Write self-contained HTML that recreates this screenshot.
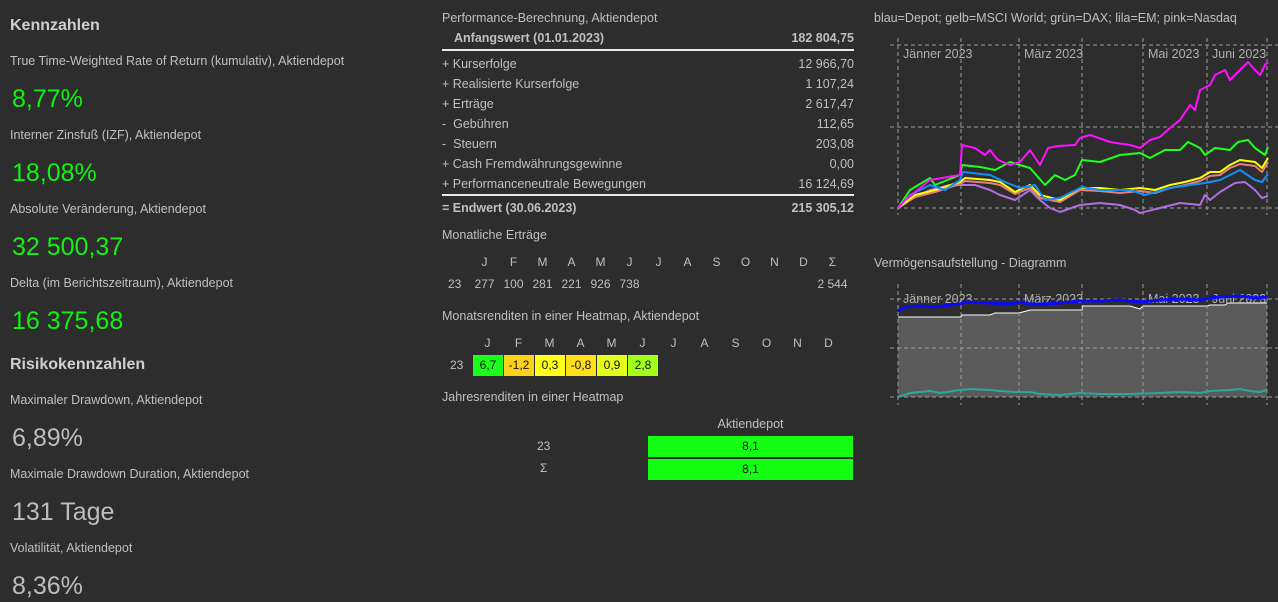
<!DOCTYPE html>
<html><head><meta charset="utf-8">
<style>
body{margin:0;width:1278px;height:602px;background:#2d2d2d;font-family:"Liberation Sans",sans-serif;color:#c0c0c0;position:relative;overflow:hidden}
.a{position:absolute;white-space:nowrap}
.h{font-weight:bold;font-size:16px;color:#cfcfcf}
.l{font-size:12.5px}
.g{font-size:25px;color:#14f014}
.v{font-size:25px;color:#bdbdbd}
.t{font-size:12.5px}
.r{text-align:right}
.c{text-align:center}
.cell{position:absolute;top:355px;width:30px;height:21px;line-height:21px;text-align:center;color:#111;font-size:12px}
</style></head><body>
<div class="a h" style="left:10px;top:17px">Kennzahlen</div>
<div class="a l" style="left:10px;top:54px">True Time-Weighted Rate of Return (kumulativ), Aktiendepot</div>
<div class="a g" style="left:12px;top:85px">8,77%</div>
<div class="a l" style="left:10px;top:128px">Interner Zinsfuß (IZF), Aktiendepot</div>
<div class="a g" style="left:12px;top:159px">18,08%</div>
<div class="a l" style="left:10px;top:202px">Absolute Veränderung, Aktiendepot</div>
<div class="a g" style="left:12px;top:233px">32 500,37</div>
<div class="a l" style="left:10px;top:276px">Delta (im Berichtszeitraum), Aktiendepot</div>
<div class="a g" style="left:12px;top:307px">16 375,68</div>
<div class="a h" style="left:10px;top:356px">Risikokennzahlen</div>
<div class="a l" style="left:10px;top:393px">Maximaler Drawdown, Aktiendepot</div>
<div class="a v" style="left:12px;top:424px">6,89%</div>
<div class="a l" style="left:10px;top:467px">Maximale Drawdown Duration, Aktiendepot</div>
<div class="a v" style="left:12px;top:498px">131 Tage</div>
<div class="a l" style="left:10px;top:541px">Volatilität, Aktiendepot</div>
<div class="a v" style="left:12px;top:572px">8,36%</div>

<div class="a t" style="left:442px;top:11px">Performance-Berechnung, Aktiendepot</div>
<div class="a t" style="left:454px;top:31px;font-weight:bold">Anfangswert (01.01.2023)</div>
<div class="a t r" style="left:700px;width:154px;top:31px;font-weight:bold">182 804,75</div>
<div class="a" style="left:442px;top:49px;width:412px;height:2px;background:#e8e8e8"></div>
<div class="a t" style="left:442px;top:54px;line-height:20px">+ Kurserfolge<br>+ Realisierte Kurserfolge<br>+ Erträge<br>-&nbsp; Gebühren<br>-&nbsp; Steuern<br>+ Cash Fremdwährungsgewinne<br>+ Performanceneutrale Bewegungen</div>
<div class="a t r" style="left:700px;width:154px;top:54px;line-height:20px">12 966,70<br>1 107,24<br>2 617,47<br>112,65<br>203,08<br>0,00<br>16 124,69</div>
<div class="a" style="left:442px;top:194px;width:412px;height:2px;background:#e8e8e8"></div>
<div class="a t" style="left:442px;top:201px;font-weight:bold">= Endwert (30.06.2023)</div>
<div class="a t r" style="left:700px;width:154px;top:201px;font-weight:bold">215 305,12</div>

<div class="a t" style="left:442px;top:228px">Monatliche Erträge</div>
<div class="a" style="left:470px;top:255px;font-size:12px">
<span class="a c" style="left:0;width:29px">J</span><span class="a c" style="left:29px;width:29px">F</span><span class="a c" style="left:58px;width:29px">M</span><span class="a c" style="left:87px;width:29px">A</span><span class="a c" style="left:116px;width:29px">M</span><span class="a c" style="left:145px;width:29px">J</span><span class="a c" style="left:174px;width:29px">J</span><span class="a c" style="left:203px;width:29px">A</span><span class="a c" style="left:232px;width:29px">S</span><span class="a c" style="left:261px;width:29px">O</span><span class="a c" style="left:290px;width:29px">N</span><span class="a c" style="left:319px;width:29px">D</span><span class="a c" style="left:348px;width:29px">Σ</span></div>
<div class="a" style="left:470px;top:277px;font-size:12px">
<span class="a" style="left:-22px">23</span><span class="a c" style="left:0;width:29px">277</span><span class="a c" style="left:29px;width:29px">100</span><span class="a c" style="left:58px;width:29px">281</span><span class="a c" style="left:87px;width:29px">221</span><span class="a c" style="left:116px;width:29px">926</span><span class="a c" style="left:145px;width:29px">738</span><span class="a c" style="left:340px;width:45px">2 544</span></div>

<div class="a t" style="left:442px;top:309px">Monatsrenditen in einer Heatmap, Aktiendepot</div>
<div class="a" style="left:472px;top:336px;font-size:12px">
<span class="a c" style="left:0;width:31px">J</span><span class="a c" style="left:31px;width:31px">F</span><span class="a c" style="left:62px;width:31px">M</span><span class="a c" style="left:93px;width:31px">A</span><span class="a c" style="left:124px;width:31px">M</span><span class="a c" style="left:155px;width:31px">J</span><span class="a c" style="left:186px;width:31px">J</span><span class="a c" style="left:217px;width:31px">A</span><span class="a c" style="left:248px;width:31px">S</span><span class="a c" style="left:279px;width:31px">O</span><span class="a c" style="left:310px;width:31px">N</span><span class="a c" style="left:341px;width:31px">D</span></div>
<div class="a" style="left:450px;top:358px;font-size:12px">23</div>
<div class="cell" style="left:473px;background:#1aff1a">6,7</div>
<div class="cell" style="left:504px;background:#ffd21a">-1,2</div>
<div class="cell" style="left:535px;background:#ffff1a">0,3</div>
<div class="cell" style="left:566px;background:#ffe01a">-0,8</div>
<div class="cell" style="left:597px;background:#e4ff1a">0,9</div>
<div class="cell" style="left:628px;background:#a2ff1a">2,8</div>

<div class="a t" style="left:442px;top:390px">Jahresrenditen in einer Heatmap</div>
<div class="a t c" style="left:648px;width:205px;top:417px">Aktiendepot</div>
<div class="a" style="left:537px;top:439px;font-size:12px">23</div>
<div class="a" style="left:540px;top:461px;font-size:12px">Σ</div>
<div class="a c" style="left:648px;top:436px;width:205px;height:21px;line-height:21px;background:#14ff14;color:#111;font-size:12px">8,1</div>
<div class="a c" style="left:648px;top:459px;width:205px;height:21px;line-height:21px;background:#14ff14;color:#111;font-size:12px">8,1</div>

<div class="a t" style="left:874px;top:11px">blau=Depot; gelb=MSCI World; grün=DAX; lila=EM; pink=Nasdaq</div>
<div class="a t" style="left:874px;top:256px">Vermögensaufstellung - Diagramm</div>

<svg class="a" style="left:0;top:0" width="1278" height="602" viewBox="0 0 1278 602">
<g stroke="#9a9a9a" stroke-width="1" stroke-dasharray="4,3" fill="none">
<path d="M890 45H1278M890 127H1278M890 208H1278"/>
<path d="M898 38V215M961 38V215M1019 38V215M1082 38V215M1143 38V215M1207 38V215M1267 38V215"/>
</g>
<g fill="#b0b0b0" font-family="Liberation Sans,sans-serif" font-size="12.5">
<text x="903" y="58">Jänner 2023</text><text x="1024" y="58">März 2023</text><text x="1148" y="58">Mai 2023</text><text x="1212" y="58">Juni 2023</text>
</g>
<g fill="none" stroke-width="2" stroke-linejoin="round">
<polyline stroke="#b070e0" points="898,208 910,200 930,190 950,185 960,185 975,185 990,190 1000,195 1015,200 1030,190 1040,200 1050,208 1060,212 1080,205 1100,203 1120,205 1135,210 1140,213 1160,208 1180,203 1200,205 1205,195 1210,200 1220,192 1235,183 1245,182 1255,190 1262,198 1268,196"/>
<polyline stroke="#e8807a" points="898,208 915,197 935,192 960,184 965,181 990,183 1000,185 1015,194 1030,188 1040,198 1060,202 1080,190 1100,191 1120,193 1140,191 1155,193 1170,188 1185,185 1200,181 1210,176 1220,175 1230,168 1240,164 1255,166 1262,172 1268,162"/>
<polyline stroke="#ffff00" points="898,208 915,195 935,190 960,182 965,178 990,180 1000,182 1015,192 1030,185 1040,195 1060,200 1080,188 1100,188 1120,190 1140,188 1155,190 1170,185 1185,182 1200,178 1210,172 1220,172 1230,165 1240,160 1255,162 1262,168 1268,158"/>
<polyline stroke="#1090ff" points="898,208 910,195 930,185 945,190 960,180 963,172 990,175 1005,182 1020,188 1035,185 1045,200 1060,198 1082,187 1100,190 1130,190 1145,195 1170,188 1190,185 1205,183 1220,180 1240,170 1255,180 1262,182 1268,174"/>
<polyline stroke="#20ff20" points="898,208 910,190 930,178 935,185 960,175 962,165 980,167 995,170 1010,162 1020,165 1030,168 1045,185 1055,175 1065,180 1075,175 1082,160 1100,162 1120,155 1140,153 1150,158 1165,150 1180,150 1188,142 1200,148 1205,155 1215,148 1230,150 1238,142 1248,140 1255,148 1265,155 1268,147"/>
<polyline stroke="#ff10ff" points="898,208 905,200 930,180 960,175 962,145 975,148 985,155 990,150 998,160 1010,165 1020,162 1030,150 1040,165 1048,148 1058,146 1075,145 1080,138 1090,135 1110,142 1130,145 1140,148 1150,140 1160,137 1170,128 1180,120 1190,105 1195,110 1200,90 1210,85 1215,75 1225,70 1230,80 1240,70 1248,62 1255,70 1260,75 1265,65 1268,62"/>
</g>
<polygon fill="#5a5a5a" points="898,317 961,317 962,315 990,315 995,313 1019,313 1030,310 1082,310 1083,306 1130,306 1140,309 1143,306 1207,306 1210,305 1225,305 1228,303 1267,303 1267,397 898,397"/>
<polyline fill="none" stroke="#fff" stroke-width="1" points="898,317 961,317 962,315 990,315 995,313 1019,313 1030,310 1082,310 1083,306 1130,306 1140,309 1143,306 1207,306 1210,305 1225,305 1228,303 1267,303"/>
<g stroke="#9a9a9a" stroke-width="1" stroke-dasharray="4,3" fill="none">
<path d="M890 299H1278M890 348H1278M890 397H1278"/>
<path d="M898 284V405M961 284V405M1019 284V405M1082 284V405M1143 284V405M1207 284V405M1267 284V405"/>
</g>
<g fill="#b0b0b0" font-family="Liberation Sans,sans-serif" font-size="12.5">
<text x="903" y="303">Jänner 2023</text><text x="1024" y="303">März 2023</text><text x="1148" y="303">Mai 2023</text><text x="1212" y="303">Juni 2023</text>
</g>
<polyline fill="none" stroke="#0a0aff" stroke-width="3" points="898,311 905,307 920,306 935,307 950,305 960,304 965,302 990,303 1010,304 1020,302 1030,304 1040,304 1060,303 1080,301 1100,301 1120,300 1140,302 1160,300 1180,299 1200,300 1210,298 1220,297 1240,296 1255,298 1267,297"/>
<polyline fill="none" stroke="#2aa8a0" stroke-width="2" points="898,397 910,393 930,391 940,393 960,390 970,389 990,390 1000,391 1015,392 1030,392 1040,394 1060,395 1080,393 1100,394 1130,394 1160,393 1180,392 1200,393 1210,391 1230,390 1240,389 1250,391 1260,392 1267,390"/>
</svg>
</body></html>
